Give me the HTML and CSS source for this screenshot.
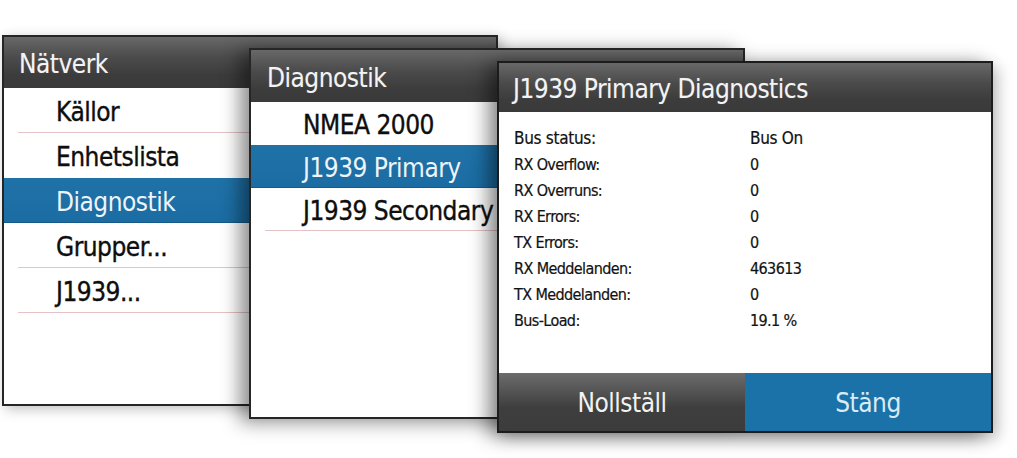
FILE: index.html
```html
<!DOCTYPE html>
<html lang="sv">
<head>
<meta charset="utf-8">
<title>J1939 Diagnostik</title>
<link rel="stylesheet" href="styles.css">
</head>
<body>
<div class="stage">
  <section class="panel p1">
    <header class="head">Nätverk</header>
    <ul class="menu">
      <li class="item">Källor</li>
      <li class="item nosep">Enhetslista</li>
      <li class="item sel">Diagnostik</li>
      <li class="item">Grupper...</li>
      <li class="item">J1939...</li>
    </ul>
  </section>

  <section class="panel p2">
    <header class="head">Diagnostik</header>
    <ul class="menu">
      <li class="item nosep">NMEA 2000</li>
      <li class="item sel">J1939 Primary</li>
      <li class="item">J1939 Secondary</li>
    </ul>
  </section>

  <section class="panel p3">
    <header class="head">J1939 Primary Diagnostics</header>
    <dl class="stats">
      <dt class="lbl big">Bus status:</dt><dd class="val big">Bus On</dd>
      <dt class="lbl">RX Overflow:</dt><dd class="val">0</dd>
      <dt class="lbl">RX Overruns:</dt><dd class="val">0</dd>
      <dt class="lbl">RX Errors:</dt><dd class="val">0</dd>
      <dt class="lbl">TX Errors:</dt><dd class="val">0</dd>
      <dt class="lbl">RX Meddelanden:</dt><dd class="val">463613</dd>
      <dt class="lbl">TX Meddelanden:</dt><dd class="val">0</dd>
      <dt class="lbl">Bus-Load:</dt><dd class="val">19.1 %</dd>
    </dl>
    <div class="actions">
      <button class="btn reset" type="button">Nollställ</button>
      <button class="btn close" type="button">Stäng</button>
    </div>
  </section>
</div>
</body>
</html>
```

FILE: styles.css
```css
* { box-sizing: border-box; }

html, body {
  margin: 0;
  padding: 0;
  background: #ffffff;
}

body {
  width: 1017px;
  height: 458px;
  overflow: hidden;
  font-family: "DejaVu Sans Condensed", "DejaVu Sans", sans-serif;
  font-stretch: condensed;
}

.stage {
  position: relative;
  width: 1017px;
  height: 458px;
}

/* windows stacked on a free canvas */
.panel {
  position: absolute;
  width: 496px;
  height: 371px;
  background: #ffffff;
  border: 2px solid #262626;
  display: flex;
  flex-direction: column;
  box-shadow: -9px 3px 18px rgba(0, 0, 0, 0.45);
  overflow: hidden;
}

.p1 { left: 2px; top: 35px; z-index: 1; box-shadow: 3px 3px 12px rgba(0,0,0,0.25); }
.p2 { left: 249px; top: 48px; z-index: 2; }
.p3 { left: 497px; top: 61px; height: 372px; z-index: 3; border-color: #1c1c1c;
      box-shadow: -9px 3px 18px rgba(0, 0, 0, 0.45), 6px 6px 14px rgba(0,0,0,0.18); }

.head {
  flex: none;
  display: flex;
  align-items: center;
  padding: 3px 0 0 15px;
  color: #f3f3f3;
  font-size: 26px;
  letter-spacing: -0.5px;
  background: linear-gradient(#686868 0%, #4b4b4b 40%, #3c3c3c 75%, #3a3a3a 100%);
  text-shadow: 0 0 1px rgba(255,255,255,0.25);
  white-space: nowrap;
}

.p1 .head { height: 51px; padding-left: 15px; }
.p2 .head { height: 52px; padding-left: 16px; }
.p3 .head { height: 49px; padding-left: 14px; }

.menu {
  list-style: none;
  margin: 0;
  padding: 0;
}

.p2 .menu { width: 246px; overflow: hidden; }

.item {
  display: flex;
  align-items: center;
  padding: 2px 0 0 52px;
  font-size: 26px;
  letter-spacing: -0.5px;
  color: #0e0e0e;
  -webkit-text-stroke: 0.35px #0e0e0e;
  white-space: nowrap;
  background-image: linear-gradient(#e3c3c7, #e3c3c7);
  background-repeat: no-repeat;
  background-position: 14px 100%;
  background-size: calc(100% - 14px) 1px;
}

.p1 .item { height: 45px; }
.p2 .item { height: 43px; }

.item.nosep { background-image: none; }

.item.sel {
  background: linear-gradient(#1f72a8, #1b6ca2);
  color: #eef4f9;
  -webkit-text-stroke: 0;
  box-shadow: inset 0 -1px 0 #155a88;
}

.stats {
  flex: 1;
  margin: 0;
  padding: 13px 0 0 15px;
  display: grid;
  grid-template-columns: 236px 1fr;
  grid-auto-rows: 26px;
  align-content: start;
  color: #121212;
}

.lbl, .val {
  margin: 0;
  display: flex;
  align-items: center;
  font-size: 16px;
  letter-spacing: -0.6px;
  -webkit-text-stroke: 0.2px #121212;
  white-space: nowrap;
}

.lbl.big, .val.big { font-size: 17px; letter-spacing: -0.3px; }

.actions {
  flex: none;
  height: 58px;
  display: grid;
  grid-template-columns: 1fr 1fr;
}

.btn {
  border: 0;
  margin: 0;
  padding: 2px 0 0;
  font-family: inherit;
  font-stretch: condensed;
  font-size: 26px;
  letter-spacing: -0.5px;
  cursor: pointer;
}

.btn.reset {
  color: #f2f2f2;
  background: linear-gradient(#6c6c6c 0%, #4d4d4d 40%, #3e3e3e 60%, #3c3c3c 100%);
}

.btn.close {
  color: #d9ebf7;
  background: #1a72a8;
}
```
